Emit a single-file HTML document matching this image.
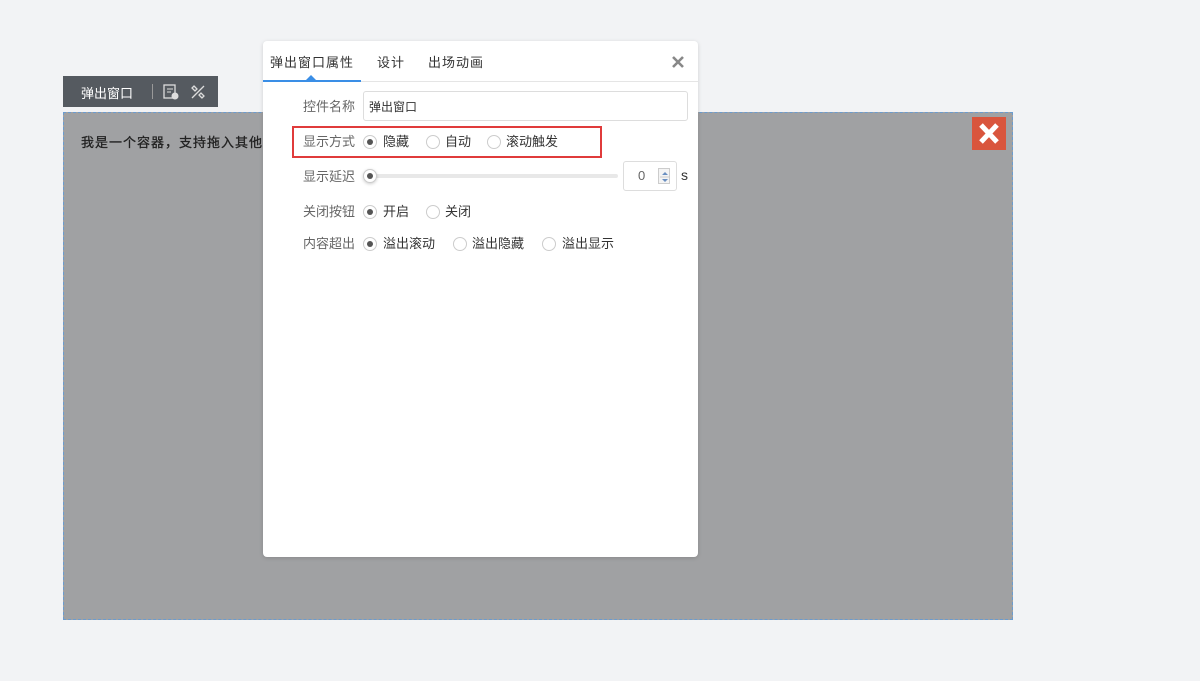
<!DOCTYPE html>
<html><head><meta charset="utf-8"><style>
*{margin:0;padding:0;box-sizing:border-box}
body{width:1200px;height:681px;background:#f2f3f5;position:relative;overflow:hidden;font-family:"Liberation Sans","Noto Sans CJK SC",sans-serif;font-size:13px;color:#333}
.a{position:absolute}
.gray{left:63px;top:112px;width:950px;height:508px;background:#a0a1a3;border:1px dashed #6b9ccf}
.tb{left:63px;top:76px;width:155px;height:31px;background:#555a60;color:#fff;font-size:13px}
.x{left:972px;top:117px;width:34px;height:33px;background:#d9553d}
.dlg{left:263px;top:41px;width:435px;height:516px;background:#fff;border-radius:4px;box-shadow:0 1px 4px rgba(0,0,0,.15)}
.hd{left:0;top:0;width:435px;height:41px;border-bottom:1px solid #e5e5e5}
.lbl{color:#666;width:92px;text-align:right;left:0}
.r{width:14px;height:14px;border:1px solid #ccc;border-radius:50%;background:#fff}
.r.on::after{content:"";position:absolute;left:3px;top:3px;width:6px;height:6px;border-radius:50%;background:#555}
</style></head><body>
<div class="a gray"><div class="a" style="left:17px;top:19px;font-size:13px;color:#222;letter-spacing:1px;-webkit-text-stroke:0.3px #222">我是一个容器，支持拖入其他</div></div>
<div class="a x"><svg width="34" height="33"><path d="M9 8 L25 25 M25 8 L9 25" stroke="#fff" stroke-width="5"/></svg></div>
<div class="a tb"><span class="a" style="left:18px;top:7px">弹出窗口</span><span class="a" style="left:89px;top:8px;width:1px;height:15px;background:#999"></span>
<svg class="a" style="left:99px;top:7px" width="18" height="18"><rect x="2" y="2" width="11" height="13" fill="none" stroke="#ddd" stroke-width="1.3"/><path d="M5 6h6M5 9h4" stroke="#ddd"/><circle cx="13" cy="13" r="3.5" fill="#ddd"/></svg>
<svg class="a" style="left:126px;top:7px" width="18" height="18"><path d="M3 15 L15 3 M5 3 l3 3 -2 2 -3 -3z M13 15 l-3 -3 2 -2 3 3z" stroke="#ddd" fill="none" stroke-width="1.3"/></svg></div>
<div class="a dlg">
 <div class="a hd">
  <span class="a" style="left:7px;top:11px;color:#333;letter-spacing:1px">弹出窗口属性</span>
  <span class="a" style="left:114px;top:11px;letter-spacing:1px">设计</span>
  <span class="a" style="left:165px;top:11px;letter-spacing:1px">出场动画</span>
  <div class="a" style="left:0;top:39px;width:98px;height:2px;background:#3a8ee6"></div>
  <div class="a" style="left:43px;top:34px;width:0;height:0;border:5px solid transparent;border-bottom-color:#3a8ee6;border-top:0"></div>
  <svg class="a" style="left:408px;top:14px" width="14" height="14"><path d="M2 2L12 12M12 2L2 12" stroke="#888" stroke-width="2.6"/></svg>
 </div>
 <span class="a lbl" style="top:55px">控件名称</span>
 <div class="a" style="left:100px;top:50px;width:325px;height:30px;border:1px solid #ddd;border-radius:3px;padding:6px 5px;font-size:12px">弹出窗口</div>
 <div class="a" style="left:29px;top:85px;width:310px;height:32px;border:2px solid #e03b3b"></div>
 <span class="a lbl" style="top:90px">显示方式</span>
 <div class="a r on" style="left:100px;top:94px"></div><span class="a" style="left:120px;top:90px">隐藏</span>
 <div class="a r" style="left:163px;top:94px"></div><span class="a" style="left:182px;top:90px">自动</span>
 <div class="a r" style="left:224px;top:94px"></div><span class="a" style="left:243px;top:90px">滚动触发</span>
 <span class="a lbl" style="top:125px">显示延迟</span>
 <div class="a" style="left:107px;top:133px;width:248px;height:4px;background:#e8e8e8;border-radius:2px"></div>
 <div class="a r on" style="left:100px;top:128px;box-shadow:0 1px 3px rgba(0,0,0,.2)"></div>
 <div class="a" style="left:360px;top:120px;width:54px;height:30px;border:1px solid #ddd;border-radius:3px"><span class="a" style="left:14px;top:6px;color:#666">0</span>
 <div class="a" style="left:34px;top:6px;width:12px;height:16px;border:1px solid #ccc;background:#f4f4f4"><svg class="a" width="12" height="16"><path d="M3 6L6 3L9 6Z M3 10L6 13L9 10Z" fill="#6a8fc0"/><path d="M1 8H11" stroke="#ccc"/></svg></div></div>
 <span class="a" style="left:418px;top:126px;font-size:14px">s</span>
 <span class="a lbl" style="top:160px">关闭按钮</span>
 <div class="a r on" style="left:100px;top:164px"></div><span class="a" style="left:120px;top:160px">开启</span>
 <div class="a r" style="left:163px;top:164px"></div><span class="a" style="left:182px;top:160px">关闭</span>
 <span class="a lbl" style="top:192px">内容超出</span>
 <div class="a r on" style="left:100px;top:196px"></div><span class="a" style="left:120px;top:192px">溢出滚动</span>
 <div class="a r" style="left:190px;top:196px"></div><span class="a" style="left:209px;top:192px">溢出隐藏</span>
 <div class="a r" style="left:279px;top:196px"></div><span class="a" style="left:299px;top:192px">溢出显示</span>
</div>
</body></html>
